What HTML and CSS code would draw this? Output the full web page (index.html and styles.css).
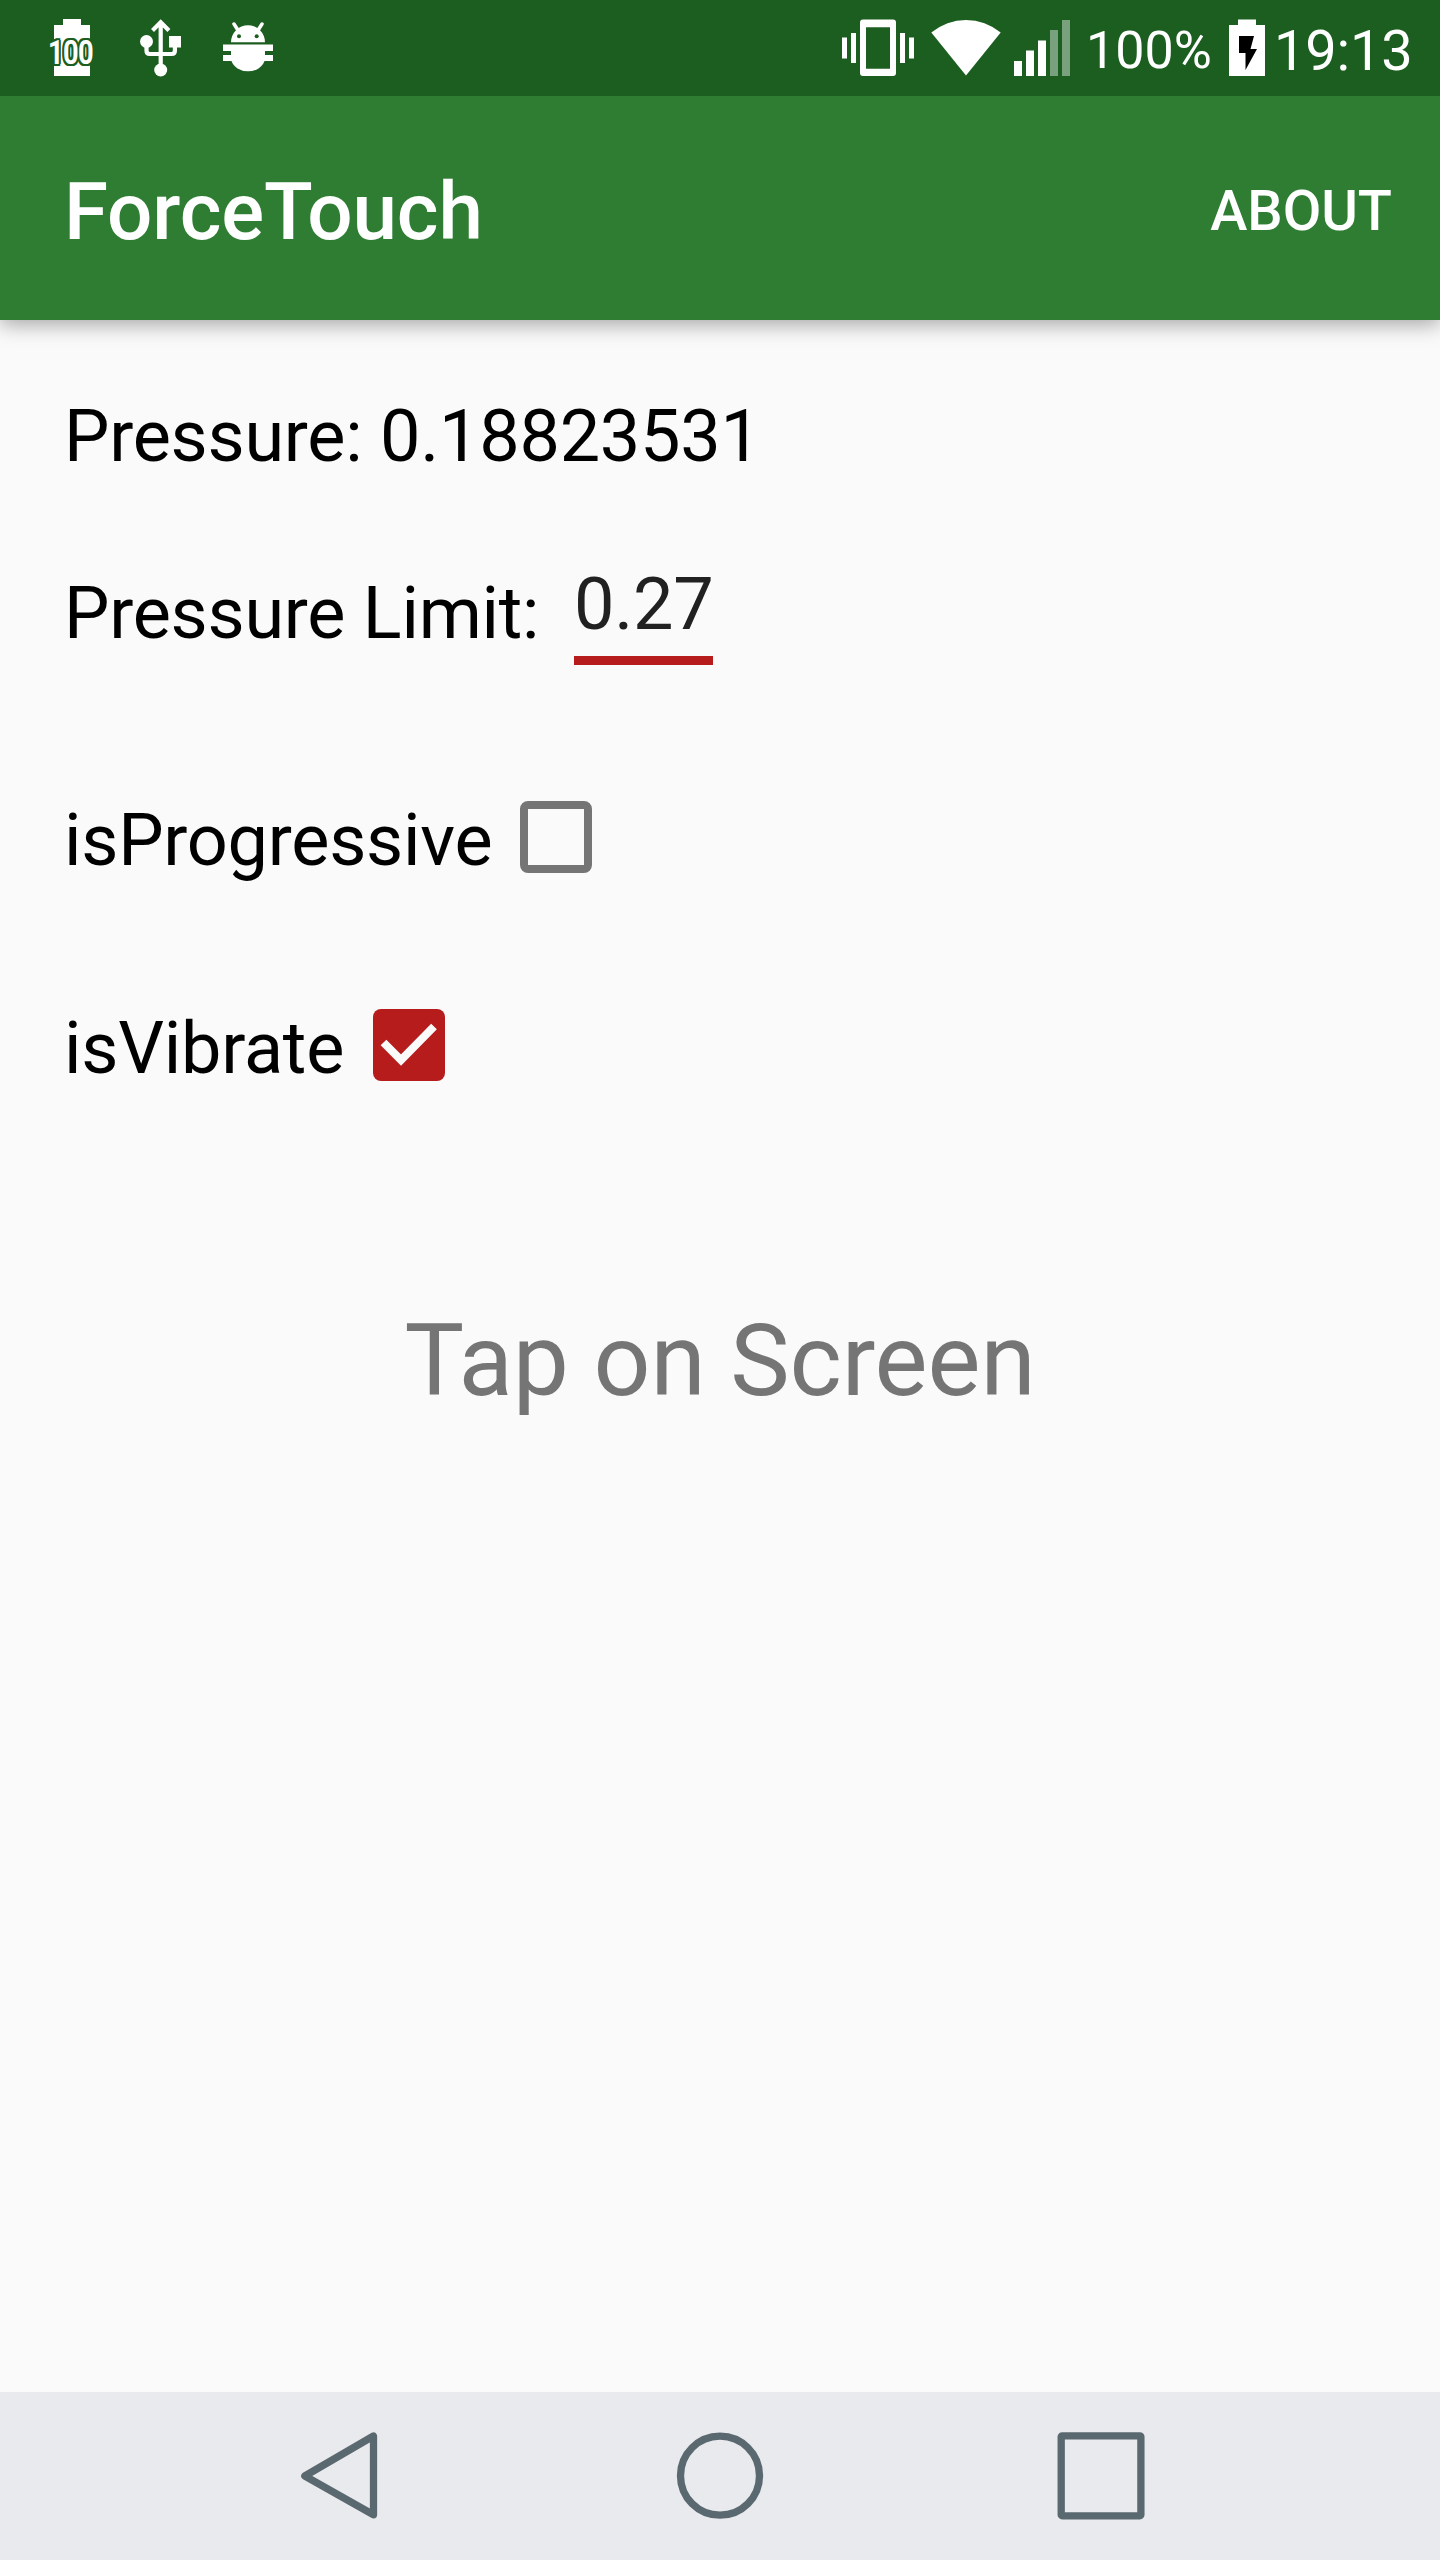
FILE: index.html
```html
<!DOCTYPE html>
<html lang="en">
<head>
<meta charset="utf-8">
<title>ForceTouch</title>
<link rel="stylesheet" href="styles.css">
</head>
<body>
<div class="screen">
  <div class="status-bar">
    <div class="status-left">
      <div class="battery-badge">
        <svg width="54" height="96" viewBox="44 0 54 96" fill="#fff">
          <path d="M63 19h18v6h9v51H54V25h9z"/>
        </svg>
        <span class="battery-level">100</span>
      </div>
      <svg class="usb-icon" width="42" height="96" viewBox="140 0 42 96" fill="#fff">
        <circle cx="146.500" cy="41.500" r="6.500"/>
        <rect x="169" y="36" width="12" height="11.500"/>
        <circle cx="160.700" cy="70" r="6.500"/>
        <path d="M160.700 70V23M152.500 30.500l8.200-8.200 8.200 8.200M146.500 42v8.800q0 3.200 3.200 3.200h22q3.200 0 3.200-3.200V44" fill="none" stroke="#fff" stroke-width="4.200"/>
      </svg>
      <svg class="debug-icon" width="50" height="96" viewBox="223 0 50 96" fill="#fff">
        <path d="M231 42.300a17 17 0 0 1 34 0zM223 44.500h50V51h-8v4h8v6h-8.500a17 13.500 0 0 1-33 0H223v-6h8v-4h-8z"/>
        <path d="M234 24l3.500 5.500M262 24l-3.500 5.500" stroke="#fff" stroke-width="3.500" stroke-linecap="round"/>
        <circle cx="239" cy="36.300" r="2" fill="#1b5e20"/>
        <circle cx="256.700" cy="36.300" r="2" fill="#1b5e20"/>
      </svg>
    </div>
    <div class="status-right">
      <svg class="vibrate-icon" width="72" height="96" viewBox="842 0 72 96" fill="#fff">
        <path fill-rule="evenodd" d="M863 19.500h30a3 3 0 0 1 3 3v50.500a3 3 0 0 1-3 3h-30a3 3 0 0 1-3-3V22.500a3 3 0 0 1 3-3zM866 27.300V68.700h24V27.300z"/>
        <path d="M842 37.500h5v21h-5zM851 33h5v30h-5zM900 33h5v30h-5zM909 37.500h5v21h-5z"/>
      </svg>
      <svg class="wifi-icon" width="70" height="96" viewBox="931 0 70 96" fill="#fff">
        <path d="M966 75.500L931.300 32.500A54 54 0 0 1 1000.700 32.500z"/>
      </svg>
      <svg class="signal-icon" width="56" height="96" viewBox="1014 0 56 96" fill="#fff">
        <path d="M1014 61h8v15h-8zM1026 50.500h8V76h-8zM1038 40.500h8V76h-8z"/>
        <path d="M1050 30h8v46h-8zM1062 20h8v56h-8z" opacity=".42"/>
      </svg>
      <span class="battery-percent">100%</span>
      <svg class="battery-icon" width="36" height="96" viewBox="1229 0 36 96">
        <path d="M1238 19.500h18V25h9v51h-36V25h9z" fill="#fff"/>
        <path d="M1239 36h15l-3.500 13h6.500l-11.500 21V53H1239z" fill="#000"/>
      </svg>
      <span class="clock">19:13</span>
    </div>
  </div>
  <header class="app-bar">
    <h1 class="app-title">ForceTouch</h1>
    <span class="about">ABOUT</span>
  </header>
  <main class="content">
    <div class="row pressure">Pressure: 0.18823531</div>
    <div class="row limit"><span>Pressure Limit:</span><span class="limit-field">0.27</span></div>
    <div class="row progressive"><span>isProgressive</span><span class="checkbox"></span></div>
    <div class="row vibrate"><span>isVibrate</span>
      <svg class="check" width="72" height="72" viewBox="0 0 72 72">
        <rect width="72" height="72" rx="8" fill="#b71c1c"/>
        <path d="M10.500 33.500L28 51 61 17.500" fill="none" stroke="#fafafa" stroke-width="8"/>
      </svg>
    </div>
    <div class="tap">Tap on Screen</div>
  </main>
  <nav class="nav-bar">
    <svg width="78" height="168" viewBox="300 2392 78 168">
      <path d="M304.800 2476L373.500 2436v78.800z"/>
    </svg>
    <svg width="88" height="168" viewBox="676 2392 88 168">
      <circle cx="720" cy="2475.700" r="39.500"/>
    </svg>
    <svg width="88" height="168" viewBox="1057 2392 88 168">
      <rect x="1061.200" y="2435.800" width="79.700" height="80" rx="1"/>
    </svg>
  </nav>
</div>
</body>
</html>
```
FILE: styles.css
```css
body {
  margin: 0;
  font-family: Roboto, sans-serif;
  background: #fafafa;
}

svg {
  display: block;
  flex: none;
}

.screen {
  display: flex;
  flex-direction: column;
  width: 1440px;
  height: 2560px;
  overflow: hidden;
}

.status-bar {
  position: relative;
  z-index: 1;
  display: flex;
  justify-content: space-between;
  height: 96px;
  flex: none;
  background: #1b5e20;
  color: #fff;
}

.status-left {
  display: flex;
  padding-left: 44px;
}

.battery-badge {
  position: relative;
  width: 54px;
}

.battery-level {
  position: absolute;
  left: 4px;
  top: 31px;
  font-size: 34px;
  font-weight: 700;
  line-height: 42px;
  letter-spacing: -0.8px;
  transform: scaleX(0.8);
  transform-origin: 0 0;
  text-shadow: 2.5px 0 #1b5e20, -2.5px 0 #1b5e20, 0 2px #1b5e20, 0 -2px #1b5e20,
    2px 2px #1b5e20, -2px 2px #1b5e20, 2px -2px #1b5e20, -2px -2px #1b5e20;
}

.usb-icon {
  margin-left: 42px;
}

.debug-icon {
  margin-left: 41px;
}

.status-right {
  display: flex;
  width: 598px;
}

.wifi-icon {
  margin-left: 17px;
}

.signal-icon {
  margin-left: 13px;
}

.battery-percent {
  width: 143px;
  margin-left: 16px;
  font-size: 52px;
  line-height: 101px;
}

.clock {
  margin-left: 9px;
  font-size: 56px;
  letter-spacing: -0.2px;
  line-height: 102px;
}

.app-bar {
  display: flex;
  justify-content: space-between;
  height: 224px;
  flex: none;
  padding: 0 48px 0 64px;
  box-sizing: border-box;
  background: #2e7d32;
  color: #fff;
  box-shadow: 0 4px 20px rgba(0, 0, 0, 0.36);
}

.app-title {
  margin: 0;
  font-size: 80px;
  font-weight: 500;
  letter-spacing: -0.15px;
  line-height: 233px;
}

.about {
  font-size: 56px;
  font-weight: 500;
  line-height: 231px;
}

.content {
  flex: 1;
  padding: 75px 64px 0;
  color: #000;
}

.row {
  display: flex;
  align-items: flex-start;
  height: 84px;
  font-size: 72px;
  letter-spacing: -0.25px;
  line-height: 84px;
  white-space: nowrap;
}

.limit {
  margin-top: 93px;
}

.limit-field {
  width: 139px;
  height: 93px;
  margin-top: -9px;
  margin-left: auto;
  margin-right: 663px;
  border-bottom: 9px solid #b71c1c;
  color: #212121;
}

.progressive {
  margin-top: 143px;
}

.checkbox {
  width: 72px;
  height: 72px;
  margin: 2px 784px 0 auto;
  box-sizing: border-box;
  border: 8px solid #757575;
  border-radius: 8px;
}

.vibrate {
  margin-top: 124px;
}

.check {
  margin: 2px 931px 0 auto;
}

.tap {
  margin-top: 211px;
  color: #757575;
  font-size: 100px;
  letter-spacing: -0.1px;
  line-height: 117px;
  text-align: center;
}

.nav-bar {
  display: flex;
  justify-content: space-between;
  height: 168px;
  flex: none;
  padding: 0 295px 0 300px;
  background: #e9eaee;
}

.nav-bar svg {
  fill: none;
  stroke: #5a6870;
  stroke-width: 7.3px;
  stroke-linejoin: round;
}

.nav-bar svg:nth-child(2) {
  margin-left: 5px;
}
```
